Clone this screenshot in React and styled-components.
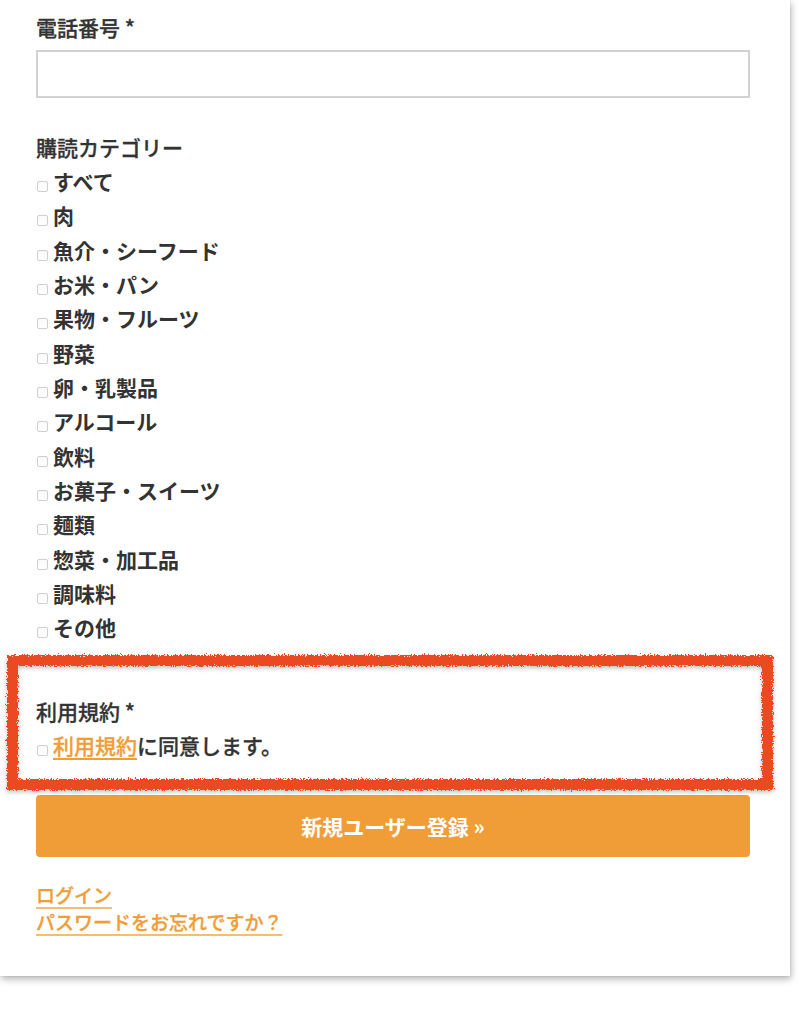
import React from "react";
import styled, { createGlobalStyle } from "styled-components";

const Global = createGlobalStyle`
  html, body { margin: 0; padding: 0; background: #fff; }
  body {
    font-family: "Noto Sans CJK JP", "Noto Sans", sans-serif;
    color: #333;
    -webkit-font-smoothing: antialiased;
  }
  #root { padding-bottom: 40px; }
`;

const Card = styled.div`
  width: 790px;
  box-sizing: border-box;
  background: #fff;
  padding: 10px 40px 41px 36px;
  box-shadow: 0 0 1px rgba(0, 0, 0, 0.18), 1px 3px 7px rgba(0, 0, 0, 0.3);
`;

const Label = styled.div`
  font-size: 21px;
  line-height: 34px;
  font-weight: 500;
  color: #333;
  -webkit-text-stroke: 0.3px #333;
  margin-top: ${(p) => p.$mt || 0}px;
`;

const TextInput = styled.input`
  display: block;
  box-sizing: border-box;
  width: 714px;
  height: 48px;
  margin-top: 6px;
  border: 2px solid #d2d2d2;
  background: #fff;
  outline: none;
`;

const List = styled.div`
  display: flex;
  flex-direction: column;
`;

const Row = styled.label`
  display: flex;
  align-items: flex-start;
  font-size: 21px;
  line-height: 34.33px;
  font-weight: 700;
  color: #333;
`;

const Box = styled.span`
  flex: none;
  width: 11px;
  height: 11px;
  margin: 17px 5px 0 1px;
  box-sizing: border-box;
  border: 1px solid #cfcfcf;
  border-radius: 2px;
  background: linear-gradient(#fafafa, #fff);
`;

const Terms = styled.section`
  position: relative;
  margin-top: 49px;
`;

const Annotation = styled.div`
  position: absolute;
  top: -39px;
  left: -29px;
  right: -23px;
  bottom: -28px;
  border: 11px solid #ea4a22;
  filter: url(#rough) drop-shadow(0 2px 2px rgba(0, 0, 0, 0.25));
  pointer-events: none;
`;

const AgreeRow = styled(Row)`
  font-weight: 500;
  -webkit-text-stroke: 0.3px currentColor;
`;

const TermsLink = styled.a`
  color: #f09d38;
  text-decoration: underline;
  text-underline-offset: 4px;
  text-decoration-thickness: 2px;
`;

const Submit = styled.button`
  display: block;
  width: 714px;
  height: 62px;
  margin-top: 33px;
  border: none;
  border-radius: 4px;
  background: #f09d38;
  color: #fff;
  font-family: inherit;
  font-size: 21px;
  font-weight: 700;
  cursor: pointer;
`;

const Links = styled.div`
  display: flex;
  flex-direction: column;
  align-items: flex-start;
  margin-top: 24px;
`;

const FooterLink = styled.a`
  font-size: 19px;
  line-height: 27px;
  font-weight: 500;
  color: #f09d38;
  -webkit-text-stroke: 0.3px #f09d38;
  text-decoration: underline;
  text-underline-offset: 4px;
  text-decoration-thickness: 2px;
  text-decoration-color: #f6bd72;
`;

const categories = [
  "すべて",
  "肉",
  "魚介・シーフード",
  "お米・パン",
  "果物・フルーツ",
  "野菜",
  "卵・乳製品",
  "アルコール",
  "飲料",
  "お菓子・スイーツ",
  "麺類",
  "惣菜・加工品",
  "調味料",
  "その他",
];

export default function App() {
  return (
    <>
      <Global />
      <svg width="0" height="0" style={{ position: "absolute" }}>
        <filter id="rough" x="-5%" y="-20%" width="110%" height="140%">
          <feTurbulence type="fractalNoise" baseFrequency="0.7" numOctaves="2" seed="3" result="n" />
          <feDisplacementMap in="SourceGraphic" in2="n" scale="6" xChannelSelector="R" yChannelSelector="G" />
        </filter>
      </svg>
      <Card>
        <Label>電話番号 *</Label>
        <TextInput type="tel" />

        <Label $mt={32}>購読カテゴリー</Label>
        <List>
          {categories.map((c) => (
            <Row key={c}>
              <Box />
              {c}
            </Row>
          ))}
        </List>

        <Terms>
          <Label>利用規約 *</Label>
          <AgreeRow>
            <Box />
            <span>
              <TermsLink href="#">利用規約</TermsLink>に同意します。
            </span>
          </AgreeRow>
          <Annotation />
        </Terms>

        <Submit type="button">新規ユーザー登録 »</Submit>

        <Links>
          <FooterLink href="#">ログイン</FooterLink>
          <FooterLink href="#">パスワードをお忘れですか？</FooterLink>
        </Links>
      </Card>
    </>
  );
}
